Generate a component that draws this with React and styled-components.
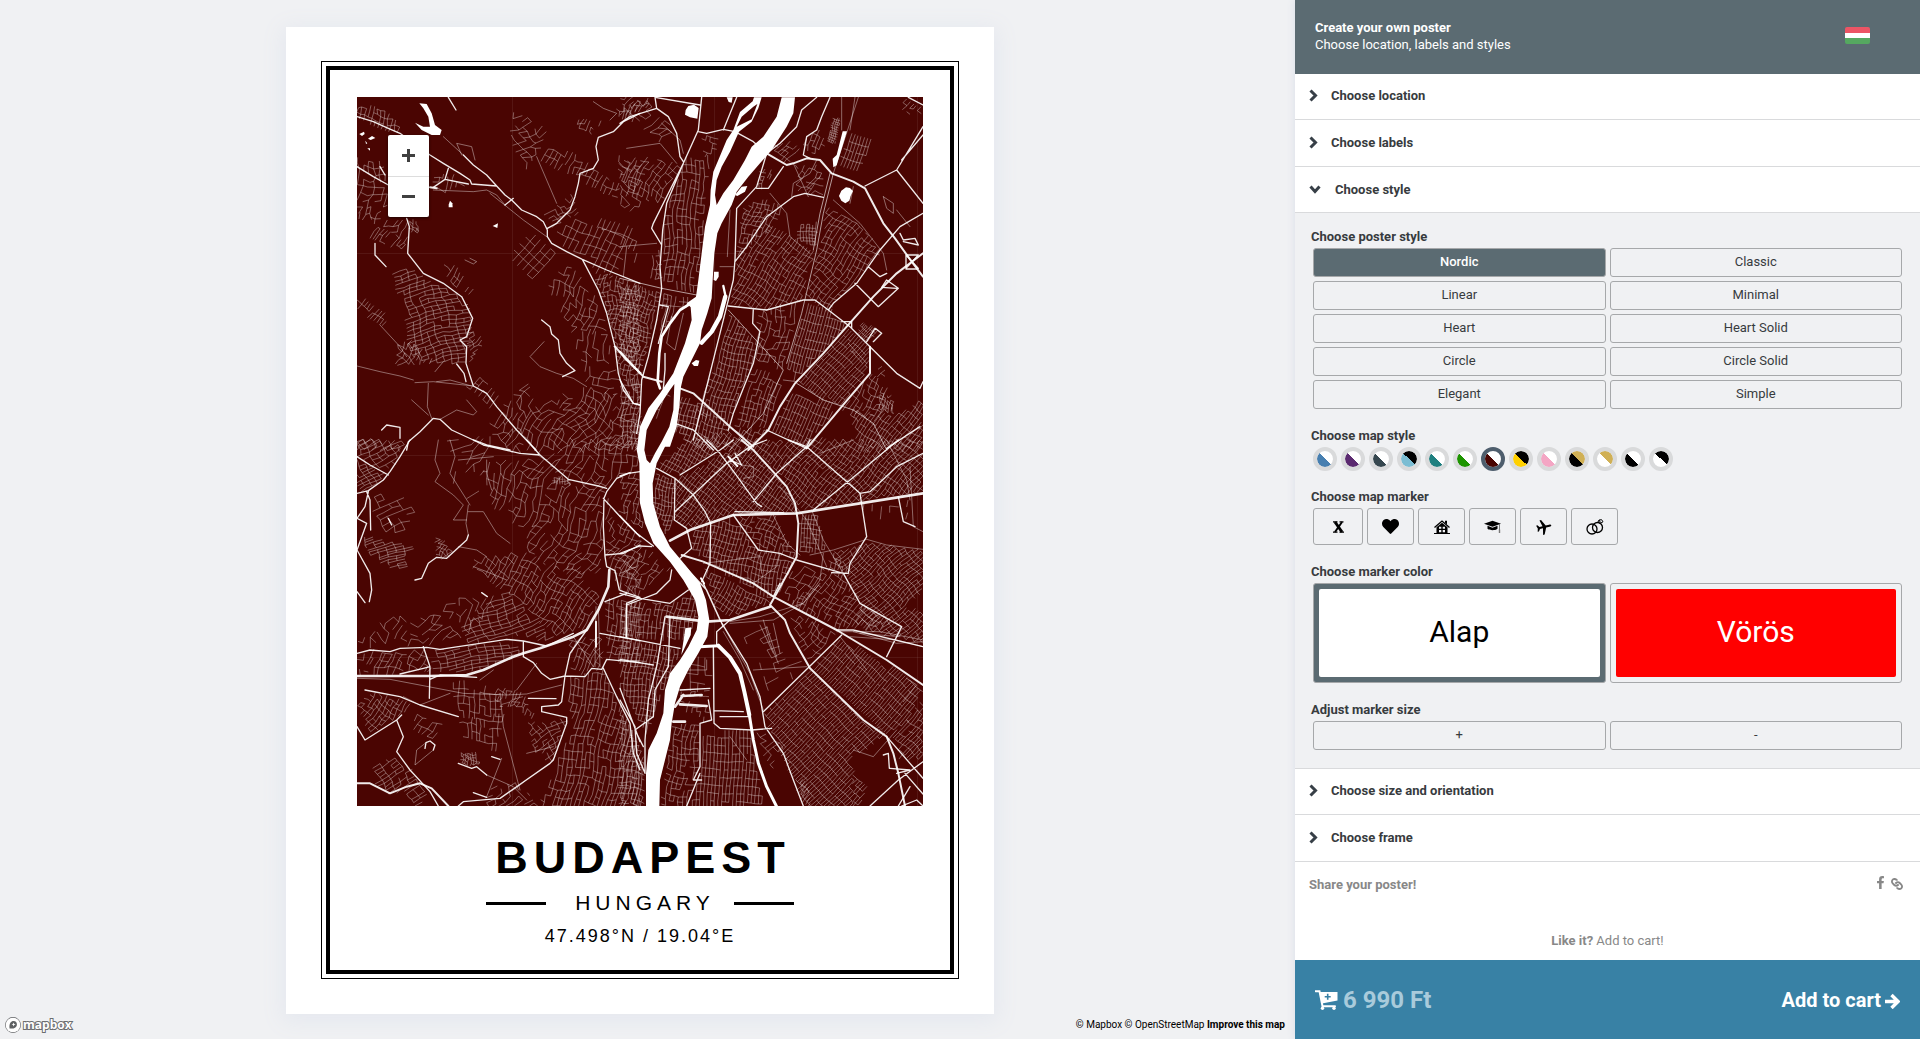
import React from "react";
import styled, { createGlobalStyle, css } from "styled-components";
import { FaHeart, FaLink, FaFacebookF } from "react-icons/fa";

const color = {
  page: "#f0f1f3",
  slate: "#5b6b72",
  line: "#d9dadc",
  text: "#373b3e",
  muted: "#888888",
  outline: "#a6a8aa",
  map: "#4a0502",
  cart: "#3881a5",
};

const GlobalStyle = createGlobalStyle`
  * { box-sizing: border-box; }
  body {
    margin: 0;
    background: ${color.page};
    color: ${color.text};
    font: 13px/17px Roboto, "Liberation Sans", sans-serif;
  }
  button { font: inherit; color: inherit; margin: 0; cursor: pointer; }
  h1, h2, p, fieldset { margin: 0; }
  a { color: inherit; text-decoration: none; }
`;

/* ---------- map data ---------- */

const QUADS = { nw: [-17, -17], ne: [263, -17], sw: [-17, 343], se: [263, 343] };

// quadrant, stroke width, polylines separated by "|"
const ROADS = [
  ["nw", 4, "51,110 100,125 145,145 180,160 270,225 310,250 360,280 390,300 395,312 470,318|370,225 400,255 440,285 470,318 495,345 515,360 545,390 590,410 610,425 622,450 622,470 635,490 680,515 727,538 800,570 900,610|622,445 650,430 690,390 705,350 715,310 720,280 760,265 775,240 768,200 775,172 820,155 850,125 900,100|51,260 100,290 145,315|280,322 315,298 325,265|315,298 385,312|200,415 208,440 203,520 250,580 310,610 365,650 398,715 380,770 360,780 380,800 378,850 400,918 440,940 470,980 530,1050 588,1110|105,490 105,525 138,560|727,538 775,630 800,700 815,760 825,800 835,880 850,930 880,970 900,975|200,1110 205,1085 240,1055 280,1015 300,1018 335,1050 400,1080 440,1095 510,1110|605,720 630,740 635,762 655,780 660,820 680,850 705,872 668,890|125,1050 140,1035 180,1042 180,1075|325,52 348,90|350,852 372,880 378,905|495,375 520,355|120,260 135,285"],
  ["nw", 6, "825,800 860,840 900,878|270,322 290,325"],
  ["nw", 2, "612,785 570,830 600,860 650,880 700,895 740,920|280,330 400,335 440,330 470,345 495,375|450,340 500,380 550,420 620,470|51,858 120,875 180,888 220,900|265,910 262,980 275,1015|300,1018 350,990 400,1005 410,995 380,960|310,170 370,225|590,230 650,370|120,735 180,800 200,830|225,908 280,905 400,918|215,960 265,1005|290,905 330,900 395,918|760,65 790,85 830,100 810,120|365,225 350,190 395,200 405,240|285,875 310,845|390,535 410,545 400,552 375,540"],
  ["sw", 4, "51,160 85,152 130,120 150,95 180,50 210,0|51,50 90,75 145,105|80,155 90,180 92,270|85,155 75,200 51,235 80,250 51,330 90,400 95,450 88,485|51,455 75,488|400,0 430,15 540,40 600,45 685,118 775,138 800,145|560,0 600,45|900,95 865,100 830,115 800,155 792,175 790,260 795,350 800,380 825,392 838,450 850,455|51,640 90,630 150,635 180,625 260,622 300,628 500,598 550,603 620,618 700,580|900,315 850,340 795,345|790,175 850,240 900,290|850,455 900,472|795,485 860,460|900,472 860,490 858,590|780,580 900,602|900,668 800,658 785,688 755,685 735,710 675,708 630,718 605,700 580,668 550,650 550,605|740,570 690,640 675,708 665,785 655,795 605,800 605,815 680,832 680,850 640,960 630,970 480,1075 370,1085 355,1098|250,620 270,680 268,775|75,750 180,770 240,795 355,830|51,860 75,900 170,840 185,825|170,840 190,890 170,935 210,990 270,1055 295,1098|225,420 245,415 265,370 290,352 320,355 380,300 385,285|790,685 830,770 870,850 880,940 900,990|410,980 440,1005|255,925 258,908 270,903 285,915 280,930|355,970 395,985 410,980|565,775 648,776|455,950 480,958|400,1058 440,1072|270,680 250,685 180,702|270,718 300,705 410,712|145,235 155,255|425,458 442,470"],
  ["sw", 8, "808,390 805,440 775,510 740,570 700,590 600,625 550,640 520,650 430,690 380,705 270,708 51,708"],
  ["sw", 6, "51,1030 90,1030 150,1060 200,1040 240,1030 275,1045 325,1098|768,545 768,620"],
  ["sw", 2, "51,715 150,718 370,760 500,765 560,762 665,735|385,215 430,215 470,280 510,310|440,1005 520,1040 560,1080|385,195 378,250 385,285|295,0 285,60 300,100 285,125 340,165 370,195 340,240 380,240|330,0 345,50 330,100 390,195|355,60 460,50|440,60 440,100 455,150|190,770 240,795 330,760|590,670 530,750|540,1050 490,860 480,760|280,930 225,975 230,930 258,908|700,590 760,680|420,720 460,690|485,955 440,1070|560,940 640,920|768,500 765,680|775,500 780,680|355,320 410,330 440,350|400,380 440,395 500,420"],
  ["ne", 4, "0,130 30,110 110,85 145,110 170,160 180,230 190,245|105,52 110,85|105,52 240,75|245,52 235,150 190,250 150,330 100,430 95,445 125,495 120,560 125,625 110,720 85,830 65,900 60,1000 50,1060|190,250 140,370 128,450 125,495|235,155 260,160 310,148 345,155 400,185 440,220|350,52 310,150|590,52 545,90 530,140 480,190 440,220 410,320 350,385 345,540 340,600 320,680 275,860 220,1080|630,52 605,110 590,150 560,170 550,225 570,235|735,318 830,270 909,140|845,240 909,165|830,270 909,370|909,400 840,440 780,510 745,560 710,610 640,670 625,690|345,545 380,500 440,410 520,350 555,340 610,352|325,678 440,690 550,660 585,660 625,690 690,740 750,800 830,880 900,925 909,905|400,685 398,730 420,755 400,850 340,1000 325,1050|0,900 40,970 60,975|440,1050 560,1105|900,1040 800,1105|120,675 145,680 115,790|745,560 780,590 800,580|705,610 775,680 835,625 800,600 785,622 830,625|865,52 909,75|840,460 850,480 885,475 895,495 850,485|135,820 135,870 130,925|410,325 445,325 490,260|165,1030 220,1050 280,1110|740,785 765,745 785,760 760,785|858,525 895,565|895,525 858,565|858,525 895,525|858,525 858,567 892,567|665,725 695,725 695,745"],
  ["ne", 6, "440,220 500,255 520,250 560,235 600,240 635,280 700,305 735,325 790,430 825,475 875,545 909,590|909,520 830,580 760,650 680,740 610,820 525,910 480,980 445,1050 385,1110|0,815 70,890 125,905|180,925 220,940 330,1040 400,1100|750,800 750,880 665,980 560,1105"],
  ["ne", 3, "640,280 610,400 590,510 545,700 500,850|0,595 125,625 230,645|530,910 610,960 700,990 760,1030 800,1110|325,690 490,870 430,1000 330,1110|630,280 600,400 580,510"],
  ["ne", 2, "715,52 640,280|665,52 665,150|705,52 690,150|640,360 720,430 790,520 800,570|20,205 120,190 170,250|0,500 110,490|20,500 10,590|450,340 500,400 510,470 570,520|515,350 520,310 570,280 590,240|690,370 700,320|330,390 322,530|520,250 565,350|125,130 180,180 190,220|790,350 820,370 820,400 800,385 790,350|685,790 740,850|155,710 140,790 165,810 190,700|300,560 340,560|830,390 870,440|490,900 530,905|600,290 560,330"],
  ["se", 4, "0,108 30,98|110,85 165,115 163,240 200,265 215,325 180,355|165,115 220,165 255,215 272,250 270,370 245,425|165,215 320,70 390,20 440,0|260,0 300,40 345,100 410,190 425,200|180,105 300,30 340,0|340,225 415,330 480,340 530,360 670,400 720,490 845,560 800,650|400,185 470,100 560,20 570,0|505,0 560,20 720,160|835,0 690,120 580,210|909,40 830,80 750,155 720,160 740,290|650,570 700,570 909,620|665,585 430,815|250,430 300,540 330,590 380,670 420,770 435,860 490,940 520,1020 550,1098|290,615 290,575 330,540|0,460 60,475 150,490 205,450|155,390 150,420 110,460 20,495 20,590|0,340 60,318 95,320|0,228 50,280 100,318|0,590 180,625|0,658 100,675|135,530 110,680 85,780 75,900 75,1000|150,530 145,680 105,750 100,830 45,870 70,920|280,620 282,850 300,865 395,870 455,865|282,812 370,815|300,830 390,830|180,750 270,745|265,780 275,840 240,850 240,980 220,1020 245,1020|740,290 690,370 685,400 635,398|750,1098 835,1020 909,965|800,890 909,1015|835,170 850,245 885,260|0,780 45,860 50,940 75,1000|810,985 870,990 830,1000|790,945 805,940 808,985|855,1000 909,1062|845,1098 890,1080 909,1098|460,470 480,430|240,1000 200,1098|190,375 260,450 310,560|835,1098 870,1040|0,745 60,905|345,40 365,75 330,60|345,215 490,218"],
  ["se", 6, "365,0 400,30 500,140 525,190 535,250 530,350 470,460 450,495|185,345 250,365 400,430 460,470 650,570 800,660 909,735|450,495 495,540 510,580 570,685 730,840 800,890 820,940 835,1000 855,1098"],
  ["se", 8, "150,302 210,270 340,225 530,220 720,190 909,160|140,530 260,545 330,540 450,500|185,768 245,765|165,800 190,765|180,793 260,798|160,845 195,845"],
  ["se", 2, "570,345 640,330 740,298 800,315 909,328|575,210 610,300 670,400|460,225 500,310 540,345|610,340 600,420 550,490 460,540 330,550|870,80 880,260 909,275|365,75 400,80 400,110 370,115|300,540 350,630 390,700 430,810|650,575 780,575 909,600|690,590 830,600 909,620|480,340 470,380 400,430|800,0 860,120 870,180|460,550 480,640|440,560 470,650|400,690 560,680|250,370 420,350 425,400|190,690 260,690 260,660|700,930 760,950 830,870|330,890 380,960|420,555 460,640|660,590 740,690|310,575 360,660 400,750|60,340 50,380 0,400|430,540 450,610 475,670|330,545 420,530 550,490 600,430|700,575 830,610 909,605|720,580 840,590|860,715 890,735 850,785|600,40 700,0|480,140 560,240 620,380"],
];

// quadrant, district outline, street angle, block sides, looseness, density
const DISTRICTS = [
  ["nw", "51,80 120,80 180,140 170,165 51,112", 18, 12, 18, 3, 0.7],
  ["nw", "51,225 140,260 140,410 51,410", 8, 16, 20, 5, 0.6],
  ["nw", "51,395 200,420 240,430 200,480 120,430 51,415", 12, 16, 20, 5, 0.5],
  ["nw", "80,450 120,440 200,480 190,510 120,490", 32, 10, 20, 3, 0.6],
  ["nw", "155,575 215,565 250,590 360,650 400,710 370,850 260,850 200,800 205,700", 76, 12, 22, 3, 0.85],
  ["nw", "170,800 210,780 280,850 170,860", 40, 14, 14, 5, 0.7],
  ["nw", "300,540 360,580 400,640 340,620", 35, 14, 22, 4, 0.7],
  ["nw", "385,740 425,790 390,850", 50, 10, 16, 4, 0.8],
  ["nw", "510,95 560,105 610,160 600,220 560,270 520,190", 60, 16, 22, 6, 0.6],
  ["nw", "600,200 690,220 760,270 830,300 850,380 700,280 610,240", 18, 14, 22, 4, 0.65],
  ["nw", "710,120 780,130 760,165 710,145", 20, 10, 16, 3, 0.6],
  ["nw", "830,90 900,70 900,120 850,120", 30, 12, 16, 5, 0.7],
  ["nw", "830,230 900,250 900,390 850,400", 25, 16, 20, 6, 0.5],
  ["nw", "515,530 575,460 650,520 575,600", 42, 20, 26, 1, 0.95],
  ["nw", "620,400 700,340 720,400 640,440", 55, 14, 16, 4, 0.7],
  ["nw", "640,460 700,415 860,470 830,580 720,530", 22, 18, 30, 2, 0.85],
  ["nw", "760,425 880,450 900,560 860,500", 20, 14, 30, 2, 0.8],
  ["nw", "760,570 900,620 900,960 840,880 810,720", 4, 11, 14, 4, 0.75],
  ["nw", "620,610 690,560 780,680 800,750 700,760", 28, 16, 22, 6, 0.65],
  ["nw", "700,760 800,750 830,880 830,960 740,920", 15, 18, 26, 6, 0.5],
  ["nw", "51,650 130,700 140,740 51,680", 36, 10, 20, 2, 0.8],
  ["nw", "440,1030 560,910 580,980 760,920 900,980 900,1110 500,1110", 38, 16, 22, 7, 0.7],
  ["nw", "51,1080 200,1080 180,1110 51,1110", 60, 14, 18, 3, 0.8],
  ["nw", "380,920 430,890 480,960 450,980", 40, 16, 22, 3, 0.7],
  ["nw", "280,290 340,280 390,310 300,345", 20, 14, 16, 4, 0.5],
  ["nw", "210,420 240,430 235,460 208,450", 20, 10, 10, 4, 0.7],
  ["sw", "51,0 130,0 190,20 150,90 90,75 51,50", 60, 14, 22, 3, 0.85],
  ["sw", "51,60 140,105 90,150 51,150", 60, 10, 18, 2, 0.85],
  ["sw", "100,160 230,180 190,290 100,260", 62, 18, 26, 4, 0.55],
  ["sw", "70,290 210,320 200,390 150,380 80,340", 75, 8, 26, 2, 0.8],
  ["sw", "440,70 560,60 640,40 700,0 900,0 900,90 820,110 790,180 790,350 780,400 700,400 560,340 540,250 470,220 430,120", 25, 17, 24, 7, 0.64],
  ["sw", "400,360 520,340 700,390 740,400 720,440 780,460 740,560 650,590 500,450 410,390", 35, 13, 22, 4, 0.75],
  ["sw", "380,540 500,450 640,600 500,590 370,610", 70, 12, 28, 3, 0.75],
  ["sw", "51,610 130,540 260,530 360,470 440,470 480,480 370,600 200,610", 30, 18, 24, 8, 0.5],
  ["sw", "51,640 250,630 270,690 51,700", 15, 14, 22, 5, 0.6],
  ["sw", "280,630 500,605 550,640 400,695 290,695", 80, 11, 24, 2, 0.75],
  ["sw", "330,720 480,760 480,830 360,830", 5, 16, 22, 3, 0.7],
  ["sw", "350,840 490,830 470,930 380,900", 8, 13, 22, 3, 0.7],
  ["sw", "51,790 110,760 220,800 170,830 90,880", 35, 12, 16, 3, 0.8],
  ["sw", "220,820 300,850 280,900 220,880", 30, 16, 24, 4, 0.6],
  ["sw", "460,745 540,755 580,830 520,800 470,800", 10, 10, 14, 5, 0.7],
  ["sw", "680,720 790,690 870,870 900,960 900,1098 600,1098 660,950 700,860", 12, 13, 24, 3, 0.78],
  ["sw", "560,850 680,840 640,960 590,950", 60, 12, 16, 3, 0.65],
  ["sw", "100,980 170,950 260,1050 240,1098 120,1040", 60, 11, 24, 2, 0.75],
  ["sw", "360,940 410,940 420,975 370,975", 10, 8, 9, 3, 0.95],
  ["sw", "800,480 900,480 900,680 800,650", 8, 13, 20, 3, 0.75],
  ["sw", "800,180 900,300 900,470 840,450 800,380", 30, 14, 20, 5, 0.65],
  ["sw", "290,290 340,330 320,355 290,350", 40, 9, 12, 4, 0.8],
  ["sw", "690,600 780,590 790,680 700,700", 30, 13, 20, 4, 0.7],
  ["sw", "470,1030 560,1020 600,1098 420,1098", 60, 14, 26, 4, 0.45],
  ["sw", "330,0 480,0 440,60 400,180 340,110", 70, 24, 30, 12, 0.4],
  ["sw", "640,110 690,115 690,135 640,130", 0, 8, 8, 2, 0.9],
  ["ne", "20,60 100,60 150,130 170,190 100,180 60,110", 40, 20, 24, 7, 0.45],
  ["ne", "0,52 90,60 80,90 0,110", 20, 12, 16, 5, 0.6],
  ["ne", "0,250 100,230 180,260 120,370 20,350", 30, 14, 20, 4, 0.7],
  ["ne", "195,240 270,230 255,330 250,440 235,600 225,640 130,600 130,450 145,370", 4, 13, 22, 3, 0.74],
  ["ne", "0,610 120,635 100,720 60,890 0,810", 12, 11, 14, 3, 0.74],
  ["ne", "90,540 120,500 125,600 90,600", 2, 12, 14, 3, 0.6],
  ["ne", "130,640 220,660 120,750", 10, 12, 16, 2, 0.7],
  ["ne", "0,910 60,900 60,1110 0,1110", 6, 12, 18, 3, 0.8],
  ["ne", "370,390 420,360 490,380 450,450 350,530", 20, 12, 14, 3, 0.75],
  ["ne", "350,550 440,440 520,480 580,520 545,660 440,690 330,670", 32, 11, 22, 2, 0.82],
  ["ne", "620,370 720,430 780,520 700,610 620,690 560,650 600,500", 35, 13, 20, 3, 0.76],
  ["ne", "330,700 400,780 400,850 320,1040 220,1000 290,850", 16, 11, 20, 2, 0.85],
  ["ne", "420,690 540,670 490,860 400,850", 12, 14, 20, 4, 0.65],
  ["ne", "560,670 620,690 680,740 525,900 500,860", 15, 9, 26, 1, 0.88],
  ["ne", "530,910 680,750 750,810 740,880 660,980 600,950", 42, 9, 24, 1, 0.9],
  ["ne", "400,870 490,900 440,1040 350,1040", 18, 12, 20, 2, 0.75],
  ["ne", "520,930 650,985 560,1095 455,1050", 25, 10, 26, 1, 0.88],
  ["ne", "670,985 750,880 800,930 780,1020", 30, 12, 18, 3, 0.72],
  ["ne", "690,165 755,185 720,270 660,250", 18, 10, 26, 1, 0.85],
  ["ne", "530,260 600,260 610,350 530,330", 30, 14, 20, 4, 0.65],
  ["ne", "820,1010 909,950 909,1110 720,1110 690,990", 35, 10, 22, 2, 0.85],
  ["ne", "540,430 590,430 590,500 530,480", 0, 9, 10, 1, 0.85],
  ["ne", "185,940 330,1050 220,1110 160,1040", 20, 11, 18, 2, 0.85],
  ["ne", "225,1080 330,1050 400,1110 220,1110", 40, 11, 16, 2, 0.85],
  ["ne", "340,1050 440,1050 385,1110", 30, 11, 16, 2, 0.8],
  ["ne", "720,730 780,750 740,790 715,765", 40, 6, 12, 1, 0.8],
  ["ne", "450,200 510,180 540,220 500,250", 40, 12, 16, 3, 0.6],
  ["ne", "550,180 600,150 620,220 560,225", 20, 12, 18, 3, 0.6],
  ["ne", "770,940 820,950 820,1000 780,990", 25, 8, 10, 4, 0.7],
  ["ne", "640,116 662,116 645,190 622,186", 14, 6, 7, 1, 1],
  ["ne", "250,170 300,165 270,240 250,230", 15, 12, 16, 2, 0.5],
  ["ne", "850,60 909,90 880,110 850,100", 35, 12, 16, 3, 0.6],
  ["ne", "680,790 750,880 800,850 790,900 740,860", 40, 14, 16, 3, 0.5],
  ["ne", "420,270 460,270 440,320 410,320", 20, 9, 12, 3, 0.6],
  ["ne", "110,930 150,940 110,1060 90,1030", 20, 18, 26, 3, 0.3],
  ["se", "115,80 200,0 330,0 180,105", 30, 10, 16, 1, 0.88],
  ["se", "110,100 165,120 160,240 140,290 100,190", 10, 10, 14, 2, 0.84],
  ["se", "170,120 330,30 400,30 500,140 530,215 340,220 210,265 165,240", 38, 10, 17, 1, 0.88],
  ["se", "400,20 440,0 909,0 909,155 580,205 530,200 500,130", 40, 11, 18, 2, 0.87],
  ["se", "215,275 340,235 415,330 530,365 450,480 270,370 220,330", 12, 11, 19, 2, 0.84],
  ["se", "350,230 460,230 530,340 520,355 420,330", 20, 12, 16, 3, 0.75],
  ["se", "540,225 590,225 620,330 540,340", 5, 9, 14, 1, 0.8],
  ["se", "255,385 450,485 330,530 280,500", 28, 11, 18, 2, 0.84],
  ["se", "640,340 740,305 909,335 909,450 850,500 909,520 909,610 700,560 720,490 680,400", 48, 10, 18, 2, 0.84],
  ["se", "500,500 600,395 670,405 720,490 830,560 660,565", 30, 12, 18, 3, 0.7],
  ["se", "480,440 540,370 600,390 560,480 520,490", 30, 18, 24, 5, 0.5],
  ["se", "340,570 430,560 480,650 560,680 430,760 390,660", 65, 22, 40, 4, 0.5],
  ["se", "430,825 570,695 790,885 740,930 690,940 700,1000 700,1098 560,1098 500,960", 45, 9, 24, 1, 0.9],
  ["se", "580,680 660,595 909,745 860,850 800,880", 42, 9, 24, 1, 0.88],
  ["se", "510,540 560,530 650,580 570,670", 42, 14, 18, 4, 0.6],
  ["se", "820,890 909,780 909,960 840,950", 40, 9, 22, 2, 0.78],
  ["se", "0,340 80,330 150,390 100,450 0,450", 25, 14, 20, 6, 0.55],
  ["se", "0,490 160,490 220,460 230,530 200,600 0,585", 10, 12, 18, 2, 0.8],
  ["se", "0,600 180,635 130,750 80,880 0,740", 8, 11, 18, 2, 0.82],
  ["se", "195,660 270,660 270,740 195,745", 4, 22, 26, 2, 0.6],
  ["se", "160,860 235,850 235,980 200,1098 125,1098 150,920", 8, 13, 18, 3, 0.7],
  ["se", "245,880 390,880 430,1098 215,1098 245,980", 3, 11, 24, 1, 0.84],
  ["se", "0,800 40,880 70,960 70,1098 0,1098", 12, 11, 16, 3, 0.8],
  ["se", "410,880 480,900 510,980 440,980", 50, 16, 20, 4, 0.5],
  ["se", "0,110 55,100 60,210 90,290 0,220", 20, 13, 18, 4, 0.65],
  ["se", "540,1020 570,1040 570,1098 545,1098", 40, 10, 12, 2, 0.7],
  ["se", "600,400 640,340 690,400 620,395", 20, 12, 15, 2, 0.7],
  ["se", "730,200 870,180 880,250 850,245 740,230", 5, 26, 20, 3, 0.35],
  ["se", "165,760 270,750 265,850 200,830", 6, 14, 16, 3, 0.35],
  ["se", "700,1000 740,1040 720,1098 700,1098", 42, 9, 20, 1, 0.8],
];

const WATER = [
  "M485,52 470,110 430,170 395,200 375,240 340,300 310,340 290,375 285,345 290,300 305,260 330,215 357,155 395,125 415,85 425,52 402,52 398,64 360,96 340,150 320,180 295,240 280,275 272,330 270,375 255,440 245,520 235,600 228,650 200,670 212,682 215,720 195,790 160,880 120,940 85,985 60,1040 50,1110 58,1150 60,1270 75,1330 100,1390 150,1445 190,1500 225,1560 235,1610 230,1650 205,1700 180,1740 150,1780 135,1830 130,1900 110,1960 85,2010 78,2080 78,2180 118,2180 120,2100 135,2040 150,1980 155,1930 165,1870 180,1820 205,1770 235,1720 262,1670 268,1620 258,1560 240,1510 200,1460 150,1400 120,1340 100,1270 98,1210 110,1150 135,1100 150,1100 170,1040 178,980 183,920 190,890 215,840 240,790 245,750 262,700 275,655 278,600 283,520 292,460 305,430 335,375 350,335 385,290 420,250 455,210 500,140 520,100 525,52Z M163,912 150,930 110,990 80,1050 73,1110 80,1140 90,1150 105,1120 125,1085 148,1040 160,990Z M400,80 412,72 395,118 350,140 365,110Z",
  "M197,90 205,78 222,74 236,84 232,116 210,112 195,104Z M320,52 338,52 335,68 326,66Z",
  "M668,154 681,154 650,256 640,262 638,236 650,225Z",
  "M657,348 664,332 678,322 690,324 699,333 692,348 688,362 676,370 664,362Z",
  "M345,345 365,320 382,318 375,335 352,348Z M282,575 296,575 296,590 288,603 281,600Z M215,850 228,840 238,842 234,858 222,858Z",
  "M196,1645 214,1642 212,1665 184,1725Z",
];
const LAKE = "238,70 260,72 275,100 285,135 305,150 300,165 275,165 245,150 225,128 250,140 270,140 265,110 250,85";
const PONDS = ["58,162 72,155 74,162 66,168", "84,176 96,168 106,174 92,180", "326,374 330,362 337,370 338,382 326,382", "458,438 474,430 472,444", "82,205 90,205 90,212", "76,182 82,190 78,192"];

const toPoints = (text) => text.trim().split(/\s+/).map((pair) => pair.split(",").map(Number));
const toPath = (lines) => lines.split("|").map((line) => "M" + line).join(" ");

function inside(x, y, poly) {
  let hit = false;
  for (let i = 0, j = poly.length - 1; i < poly.length; j = i++) {
    const [xi, yi] = poly[i];
    const [xj, yj] = poly[j];
    if (yi > y !== yj > y && x < ((xj - xi) * (y - yi)) / (yj - yi) + xi) hit = !hit;
  }
  return hit;
}

// Fills a district with a slightly irregular net of side streets.
function streets(outline, angle, stepX, stepY, loose, density, seed) {
  const poly = toPoints(outline);
  const xs = poly.map((p) => p[0]);
  const ys = poly.map((p) => p[1]);
  const cx = (Math.min(...xs) + Math.max(...xs)) / 2;
  const cy = (Math.min(...ys) + Math.max(...ys)) / 2;
  const reach = Math.hypot(Math.max(...xs) - cx, Math.max(...ys) - cy);
  const cos = Math.cos((angle * Math.PI) / 180);
  const sin = Math.sin((angle * Math.PI) / 180);
  const noise = (a, b, c) => {
    const v = Math.sin(a * 127.1 + b * 311.7 + c * 74.7 + seed * 53.3) * 43758.5453;
    return v - Math.floor(v);
  };
  const node = (i, j) => {
    const wave = loose * 1.5;
    const u = i * stepX + (noise(i, j, 1) - 0.5) * loose * 1.6 + Math.sin(j * 0.7 + seed) * wave;
    const v = j * stepY + (noise(i, j, 2) - 0.5) * loose * 1.6 + Math.sin(i * 0.6 + seed) * wave;
    return [cx + u * cos - v * sin, cy + u * sin + v * cos];
  };
  const nx = Math.ceil(reach / stepX);
  const ny = Math.ceil(reach / stepY);
  let d = "";
  for (let i = -nx; i <= nx; i++) {
    for (let j = -ny; j <= ny; j++) {
      const [x, y] = node(i, j);
      [[i, j + 1, density + 0.12, 3], [i + 1, j, density - 0.06, 4]].forEach(([a, b, keep, k]) => {
        const [x2, y2] = node(a, b);
        if (noise(i, j, k) < keep && inside((x + x2) / 2, (y + y2) / 2, poly)) {
          d += `M${x.toFixed(0)},${y.toFixed(0)}L${x2.toFixed(0)},${y2.toFixed(0)}`;
        }
      });
    }
  }
  return d;
}

const NETWORK = DISTRICTS.map(([quad, outline, angle, a, b, loose, density], index) => ({
  quad,
  d: streets(outline, angle, a, b, loose, density, index + 1),
}));

const place = (quad) => `translate(${QUADS[quad][0]} ${QUADS[quad][1]}) scale(0.33333)`;

function CityMap() {
  return (
    <MapDrawing viewBox="0 0 566 709" role="img" aria-label="Budapest">
      <rect width="566" height="709" fill={color.map} />
      <path d="M155.500,0V709M357.500,0V709M560.500,0V709M0,156.500H566M0,358.500H566M0,560.500H566" stroke="#fff" strokeOpacity="0.07" />
      <g fill="none" stroke="#fff" strokeOpacity="0.52" strokeWidth="2">
        {NETWORK.map(({ quad, d }, i) => <path key={i} d={d} transform={place(quad)} />)}
      </g>
      <g fill="none" stroke="#fff" strokeLinejoin="round" strokeLinecap="round">
        {ROADS.map(([quad, width, lines], i) => (
          <path key={i} d={toPath(lines)} strokeWidth={width} strokeOpacity={width < 4 ? 0.6 : 0.92} transform={place(quad)} />
        ))}
      </g>
      <g transform={place("ne")} fill="#fff">
        {WATER.map((d) => <path key={d} d={d} fillRule="evenodd" />)}
        <g fill="none" stroke="#fff" strokeLinejoin="round" strokeLinecap="round">
          <path strokeWidth="8" d="M222,664 180,690 150,730 125,770 118,820 113,905 120,925" />
          <path strokeWidth="13" d="M316,650 300,710 275,755 245,788" />
          <path strokeWidth="7" d="M310,618 317,650" />
          <path strokeWidth="12" d="M295,1697 330,1732 360,1780 373,1835 388,1905" />
          <path strokeWidth="9" d="M240,1700 295,1697M388,1905 400,1980 415,2050 440,2120 470,2180" />
          <path strokeWidth="6" d="M325,1130 352,1158M243,1495 252,1510" />
        </g>
      </g>
      <g transform={place("nw")} fill="#fff">
        <polygon points={LAKE} />
        {PONDS.map((p) => <polygon key={p} points={p} />)}
      </g>
    </MapDrawing>
  );
}

/* ---------- layout ---------- */

const Page = styled.div`
  display: flex;
  min-height: 100vh;
`;

const Stage = styled.main`
  flex: 1;
  min-width: 0;
  display: flex;
  flex-direction: column;
  padding-top: 27px;
`;

const Poster = styled.article`
  width: 708px;
  max-width: 100%;
  margin: 0 auto;
  padding: 34px 35px 35px;
  background: #fff;
  box-shadow: 0 4px 20px 4px #e5e8ef;
`;

const PosterArea = styled.div`
  padding-right: 15px;
`;

const OuterFrame = styled.div`
  border: 1px solid #000;
  padding: 4px;
`;

const InnerFrame = styled.div`
  border: 4px solid #000;
  padding: 27px 27px 29px;
  height: 908px;
  display: flex;
  flex-direction: column;
  align-items: center;
  color: #000;
  font-family: "Liberation Sans", Arial, sans-serif;
`;

const MapBox = styled.div`
  position: relative;
  width: 100%;
`;

const MapDrawing = styled.svg`
  display: block;
  width: 100%;
`;

const ZoomControls = styled.div`
  position: absolute;
  left: 31px;
  top: 38px;
  width: 41px;
  border-radius: 2px;
  background: #fff;
  box-shadow: 0 1px 3px rgba(0, 0, 0, 0.6);
`;

const ZoomButton = styled.button`
  display: flex;
  align-items: center;
  justify-content: center;
  width: 100%;
  height: 41px;
  padding: 0;
  border: 0;
  background: none;
  & + & { border-top: 1px solid #dddddd; padding-bottom: 2px; }
`;

const City = styled.h1`
  margin-top: 26px;
  padding-left: 6px;
  font-size: 45px;
  line-height: 52px;
  letter-spacing: 6px;
`;

const Country = styled.div`
  display: flex;
  align-items: center;
  justify-content: space-between;
  width: 308px;
  margin-top: 6px;
  font-size: 21px;
  line-height: 26px;
  letter-spacing: 5px;
  &::before, &::after {
    content: "";
    width: 60px;
    height: 3px;
    background: #000;
  }
  span { padding-left: 10px; }
`;

const Coordinates = styled.p`
  margin-top: 9px;
  font-size: 18px;
  line-height: 22px;
  letter-spacing: 2px;
`;

const MapCredits = styled.footer`
  display: flex;
  align-items: center;
  justify-content: space-between;
  margin-top: auto;
  height: 25px;
  padding: 0 10px 4px 5px;
  color: #000;
  font-size: 10px;
  line-height: 12px;
`;

const MapboxLogo = styled.a`
  display: flex;
  align-items: center;
  gap: 2px;
  color: #fff;
  font: 700 12px/16px "Open Sans", sans-serif;
  -webkit-text-stroke: 2px #6b6d6f;
  paint-order: stroke fill;
`;

const Sidebar = styled.aside`
  flex: 0 0 625px;
  display: flex;
  flex-direction: column;
  background: #fff;
  box-shadow: 0 0 8px #d9dde8;
`;

const Intro = styled.header`
  display: flex;
  align-items: center;
  justify-content: space-between;
  height: 74px;
  padding: 0 50px 3px 20px;
  background: ${color.slate};
  color: #fff;
`;

const Flag = styled.svg`
  display: block;
  width: 25px;
  height: 17px;
`;

const Step = styled.button`
  display: flex;
  align-items: center;
  gap: ${(p) => (p.$open ? 14 : 13)}px;
  width: 100%;
  height: ${(p) => (p.$short ? 46 : 47)}px;
  padding: 0 14px ${(p) => (p.$short && !p.$open ? 2 : 1)}px;
  border: 0;
  border-bottom: 1px solid ${color.line};
  background: #fff;
  font-weight: 700;
  text-align: left;
`;

const StepIcon = styled.svg`
  display: block;
  fill: none;
  stroke: #373f47;
  stroke-width: 3;
`;

const Options = styled.section`
  display: flex;
  flex-direction: column;
  gap: 16px;
  padding: 13px 18px 18px 16px;
  border-bottom: 1px solid ${color.line};
  background: ${color.page};
`;

const Group = styled.fieldset`
  border: 0;
  padding: 0;
  min-width: 0;
`;

const GroupTitle = styled.legend`
  padding: 0;
  font-weight: 700;
  line-height: 22px;
`;

const Pair = styled.div`
  display: grid;
  grid-template-columns: 1fr 1fr;
  gap: 4px;
  padding-left: 2px;
`;

const Line = styled.div`
  display: flex;
  gap: 4px;
  padding-left: 2px;
`;

const SwatchLine = styled(Line)`
  height: 23px;
`;

const outlined = css`
  border: 1px solid ${color.outline};
  border-radius: 3px;
  background: none;
`;

const Choice = styled.button`
  ${outlined}
  height: 29px;
  padding: 0 0 2px;
  ${(p) => p.$active && css`background: ${color.slate}; color: #fff; font-weight: 500;`}
`;

const Swatch = styled.input`
  appearance: none;
  flex: none;
  width: 24px;
  height: 24px;
  margin: 0;
  border: 4px solid #d9dadb;
  border-radius: 50%;
  background: linear-gradient(45deg, ${(p) => p.$low} 50%, ${(p) => p.$high} 50%) padding-box;
  cursor: pointer;
  &:checked { border-color: #4e5e6d; }
`;

const MarkerButton = styled.button`
  ${outlined}
  display: flex;
  align-items: center;
  justify-content: center;
  width: 47px;
  height: 37px;
  padding: 0;
  color: #000;
  &:first-child { width: 50px; }
`;

const Tilted = styled.span`
  display: flex;
  transform: rotate(${(p) => p.$angle}deg);
`;

const ColorButton = styled.button`
  ${outlined}
  height: 100px;
  padding: 5px;
  ${(p) => p.$active && css`background: ${color.slate};`}
`;

const ColorFace = styled.span`
  display: flex;
  align-items: center;
  justify-content: center;
  height: 100%;
  border-radius: 2px;
  background: ${(p) => p.$paint};
  color: ${(p) => p.$ink};
  font-size: 30px;
  line-height: 36px;
  padding-bottom: 2px;
`;

const Share = styled.div`
  display: flex;
  align-items: center;
  justify-content: space-between;
  height: 44px;
  padding: 0 17px 0 14px;
  color: ${color.muted};
`;

const ShareLinks = styled.nav`
  display: flex;
  align-items: center;
  gap: 4px;
`;

const Prompt = styled.p`
  margin-top: auto;
  padding-bottom: 11px;
  color: ${color.muted};
  text-align: center;
`;

const CartBar = styled.button`
  display: flex;
  align-items: center;
  justify-content: space-between;
  width: 100%;
  height: 79px;
  padding: 0 20px;
  border: 0;
  background: ${color.cart};
  color: #fff;
  font-weight: 700;
`;

const Price = styled.span`
  display: flex;
  align-items: center;
  gap: 5px;
  color: #a9cbdb;
  font-size: 24px;
  line-height: 28px;
`;

const Action = styled.span`
  display: flex;
  align-items: center;
  gap: 4px;
  font-size: 20px;
  line-height: 28px;
`;

/* ---------- pieces ---------- */

function StepRow({ label, open, short }) {
  return (
    <Step $open={open} $short={short || open} aria-expanded={!!open}>
      {open ? (
        <StepIcon width="12" height="9" viewBox="0 0 12 9"><path d="M1.500 1.500 6 6.500 10.500 1.500" /></StepIcon>
      ) : (
        <StepIcon width="9" height="13" viewBox="0 0 9 13"><path d="M1.500 1.500 6.500 6.500 1.500 11.500" /></StepIcon>
      )}
      {label}
    </Step>
  );
}

const CrossIcon = () => (
  <svg width="11" height="12" viewBox="0 0 11 12" fill="none" stroke="#000">
    <path d="M2 1 9 11" strokeWidth="3" />
    <path d="M9 1 2 11" strokeWidth="2" />
    <path d="M0 .8H4.500M6.500 .8H10.500M0 11.200H4.500M6.500 11.200H11" strokeWidth="1.200" />
  </svg>
);

const HouseIcon = () => (
  <svg width="16" height="14" viewBox="0 0 16 14">
    <path d="M.5 7.500 8 1l7.500 6.500" fill="none" stroke="#000" strokeWidth="1.300" />
    <path d="M11 .8h2v3.700l-2-1.700zM2.500 7.300 8 2.700l5.500 4.600V13H16v1H0v-1h2.500z" />
    <path d="M5 6.800h2.300v2H5zM8.700 6.800H11v2H8.700zM5 10h2.300v2.200H5zM8.700 10H11v2.200H8.700z" fill="#f0f1f3" />
  </svg>
);

const CapIcon = () => (
  <svg width="17" height="14" viewBox="0 0 17 14">
    <path d="M0 3.700 8.500 .8 17 3.700 8.500 6.800Z" />
    <path d="M3.500 5.800 8.500 7.700 13.500 5.800V8.800C12 10 10.500 10.200 8.500 10.200S5 10 3.500 8.800Z" />
    <path d="M15.500 4V12.500" stroke="#777" strokeWidth="1" />
    <path d="M14.800 9.500H16.200V13H14.800Z" fill="#777" />
  </svg>
);

const PlaneIcon = () => (
  <svg width="16" height="16" viewBox="0 0 16 16">
    <path
      transform="rotate(-14 8 8)"
      d="M15.500 8C15.500 8.700 14.500 9 13.500 9H10L6.800 15.500H5.200L6.700 9H3.600L2 11.200H.7L1.600 8 .7 4.800H2L3.600 7H6.700L5.200 .5H6.800L10 7H13.500C14.500 7 15.500 7.300 15.500 8Z"
    />
  </svg>
);

const RingsIcon = () => (
  <svg width="18" height="16" viewBox="0 0 18 16" fill="none" stroke="#000" strokeWidth="1.300">
    <circle cx="6" cy="10" r="5" />
    <circle cx="11.500" cy="8.500" r="5" />
    <path d="M12 3l1-2 2.600-.3L17 2.800 14 4.500zM13 1l1.500 2.500" strokeWidth="1" />
  </svg>
);

const CartIcon = () => (
  <svg width="23" height="20" viewBox="0 0 23 20">
    <path d="M.5 1.200H4.500L7.500 16.200H20" fill="none" stroke="#fff" strokeWidth="2" strokeLinecap="round" />
    <path d="M5 2H22.500V10.500L7 13.500Z" fill="#fff" />
    <path d="M12.700 3.700V9.700M9.700 6.700H15.700" stroke="#3881a5" strokeWidth="1.600" />
    <circle cx="7.500" cy="18.300" r="1.700" fill="#fff" />
    <circle cx="19" cy="18.300" r="1.700" fill="#fff" />
  </svg>
);

const ArrowIcon = () => (
  <svg width="15" height="18" viewBox="0 0 15 18" fill="none" stroke="#fff" strokeWidth="3.400">
    <path d="M0 10.500H12M6.500 4 13 10.500 6.500 17" />
  </svg>
);

const STYLES = ["Nordic", "Classic", "Linear", "Minimal", "Heart", "Heart Solid", "Circle", "Circle Solid", "Elegant", "Simple"];
const SWATCHES = [
  ["#477fb0", "#fff"], ["#5b2a70", "#fff"], ["#36474f", "#fff"], ["#7bbdd3", "#000"], ["#1f8080", "#fff"],
  ["#1d9400", "#fff"], ["#4a0502", "#fff"], ["#ffd000", "#000"], ["#f4a6c4", "#fff"], ["#000", "#d0b055"],
  ["#fff", "#d0b055"], ["#000", "#fff"], ["#fff", "#000"],
];

export default function App() {
  return (
    <Page>
      <GlobalStyle />
      <Stage>
        <PosterArea>
          <Poster>
            <OuterFrame>
              <InnerFrame>
                <MapBox>
                  <CityMap />
                  <ZoomControls>
                    <ZoomButton aria-label="Zoom in">
                      <svg width="13" height="13" viewBox="0 0 13 13"><path d="M6.500 0V13M0 6.500H13" stroke="#404040" strokeWidth="3" /></svg>
                    </ZoomButton>
                    <ZoomButton aria-label="Zoom out">
                      <svg width="13" height="13" viewBox="0 0 13 13"><path d="M0 6.500H13" stroke="#404040" strokeWidth="3" /></svg>
                    </ZoomButton>
                  </ZoomControls>
                </MapBox>
                <City>BUDAPEST</City>
                <Country><span>HUNGARY</span></Country>
                <Coordinates>47.498°N / 19.04°E</Coordinates>
              </InnerFrame>
            </OuterFrame>
          </Poster>
        </PosterArea>
        <MapCredits>
          <MapboxLogo href="#mapbox">
            <svg width="16" height="16" viewBox="0 0 16 16">
              <circle cx="8" cy="8" r="7.300" fill="#fff" stroke="#5f6163" strokeWidth="1.200" />
              <path d="M4.500 11.500C4 6 6 4 8.600 4a3.400 3.400 0 0 1 3.300 3.400C11.900 10.500 9 12 4.500 11.500Z" fill="#5f6163" />
              <path d="M8.600 5.500 9.200 6.900 10.600 7.500 9.200 8.100 8.600 9.500 8 8.100 6.600 7.500 8 6.900Z" fill="#fff" />
            </svg>
            mapbox
          </MapboxLogo>
          <span>
            <a href="#about">© Mapbox</a> <a href="#osm">© OpenStreetMap</a> <a href="#improve"><b>Improve this map</b></a>
          </span>
        </MapCredits>
      </Stage>

      <Sidebar>
        <Intro>
          <div>
            <b>Create your own poster</b>
            <p>Choose location, labels and styles</p>
          </div>
          <a href="#hu" aria-label="Magyar">
            <Flag viewBox="0 0 25 17">
              <path d="M2 0H23A2 2 0 0 1 25 2V6H0V2A2 2 0 0 1 2 0Z" fill="#ec5565" />
              <path d="M0 6H25V11H0Z" fill="#fff" />
              <path d="M0 11H25V15A2 2 0 0 1 23 17H2A2 2 0 0 1 0 15Z" fill="#55a860" />
            </Flag>
          </a>
        </Intro>
        <StepRow label="Choose location" short />
        <StepRow label="Choose labels" />
        <StepRow label="Choose style" open />
        <Options>
          <Group>
            <GroupTitle>Choose poster style</GroupTitle>
            <Pair>
              {STYLES.map((name, i) => <Choice key={name} $active={i === 0} aria-pressed={i === 0}>{name}</Choice>)}
            </Pair>
          </Group>
          <Group>
            <GroupTitle>Choose map style</GroupTitle>
            <SwatchLine>
              {SWATCHES.map(([low, high], i) => (
                <Swatch key={i} type="radio" name="map-style" aria-label={`Map style ${i + 1}`} defaultChecked={i === 6} $low={low} $high={high} />
              ))}
            </SwatchLine>
          </Group>
          <Group>
            <GroupTitle>Choose map marker</GroupTitle>
            <Line>
              <MarkerButton aria-label="No marker"><CrossIcon /></MarkerButton>
              <MarkerButton aria-label="Heart"><FaHeart size={17} /></MarkerButton>
              <MarkerButton aria-label="House"><HouseIcon /></MarkerButton>
              <MarkerButton aria-label="Graduation"><CapIcon /></MarkerButton>
              <MarkerButton aria-label="Plane"><PlaneIcon /></MarkerButton>
              <MarkerButton aria-label="Rings"><RingsIcon /></MarkerButton>
            </Line>
          </Group>
          <Group>
            <GroupTitle>Choose marker color</GroupTitle>
            <Pair>
              <ColorButton $active aria-pressed="true"><ColorFace $paint="#fff" $ink="#000">Alap</ColorFace></ColorButton>
              <ColorButton aria-pressed="false"><ColorFace $paint="#f00" $ink="#fff">Vörös</ColorFace></ColorButton>
            </Pair>
          </Group>
          <Group>
            <GroupTitle>Adjust marker size</GroupTitle>
            <Pair>
              <Choice>+</Choice>
              <Choice>-</Choice>
            </Pair>
          </Group>
        </Options>
        <StepRow label="Choose size and orientation" short />
        <StepRow label="Choose frame" />
        <Share>
          <b>Share your poster!</b>
          <ShareLinks>
            <a href="#facebook" aria-label="Facebook"><FaFacebookF size={13} /></a>
            <a href="#link" aria-label="Link"><Tilted $angle={90}><FaLink size={12} /></Tilted></a>
          </ShareLinks>
        </Share>
        <Prompt><b>Like it?</b> Add to cart!</Prompt>
        <CartBar>
          <Price><CartIcon />6 990 Ft</Price>
          <Action>Add to cart<ArrowIcon /></Action>
        </CartBar>
      </Sidebar>
    </Page>
  );
}
